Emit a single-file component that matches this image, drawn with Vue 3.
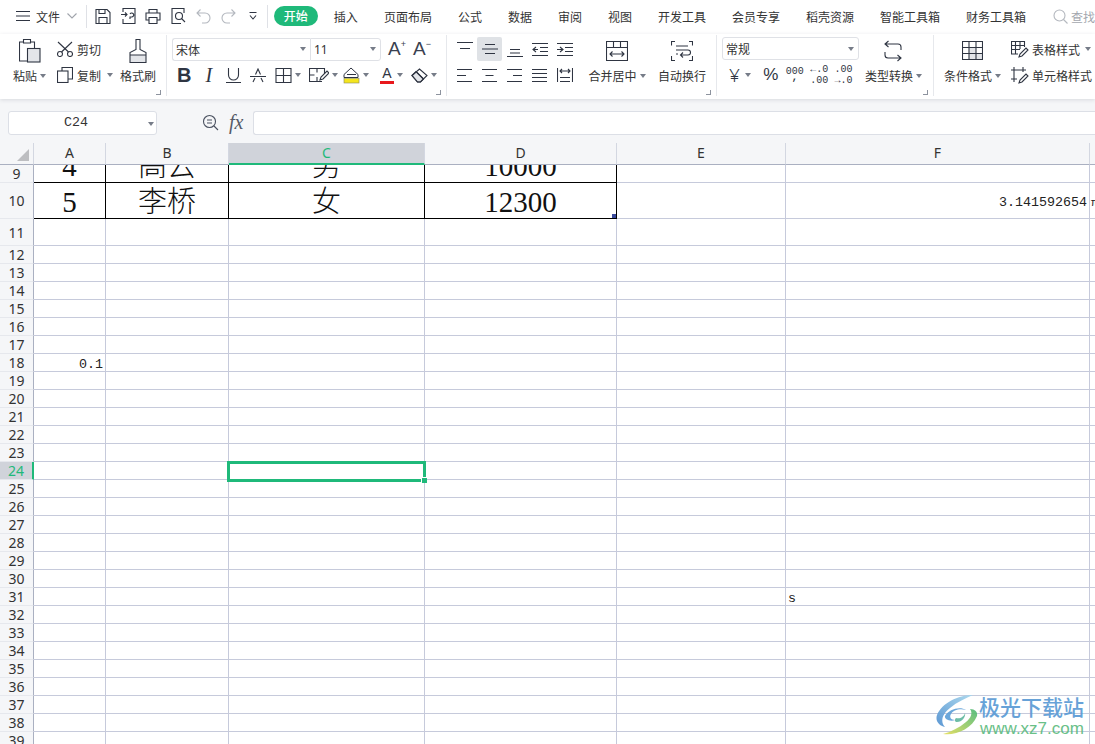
<template>
  <div class="app">
    <!-- top menu bar -->
    <div class="topbar">
      <svg class="ic menu-ic" width="14" height="12" viewBox="0 0 14 12"><path d="M0 1.5h14M0 6h14M0 10.5h14" /></svg>
      <span class="file-label">文件</span>
      <svg class="ic chev" width="10" height="6" viewBox="0 0 10 6"><path d="M.5.5L5 5 9.500.5" /></svg>
      <i class="topsep first"></i>
      <div class="quick">
        <svg class="ic" width="16" height="15" viewBox="0 0 16 15"><path d="M1 .5h11l3 3v11H1zM4 .5v4h6v-4M4 14.500V8.500h8v6" /></svg>
      </div>
      <div class="quick">
        <svg class="ic" width="16" height="16" viewBox="0 0 16 16"><path d="M3 4V.5h12v15H3V11M1 6.500h6M5 4.500l2 2-2 2M10 11V9h2a2 2 0 1 0-2-3" /></svg>
      </div>
      <div class="quick">
        <svg class="ic" width="16" height="15" viewBox="0 0 16 15"><path d="M4 4V.5h8V4M4 11H1V4h14v7h-3M4 8.500h8v6H4z" /></svg>
      </div>
      <div class="quick">
        <svg class="ic" width="15" height="16" viewBox="0 0 15 16"><path d="M13 5V.5H1v15h9" /><circle cx="8" cy="8" r="3.500" /><path d="M10.500 10.500l3.500 3.500" /></svg>
      </div>
      <div class="quick">
        <svg class="ic pale" width="15" height="15" viewBox="0 0 15 15"><path d="M4.500.5L1 4l3.500 3.500M1 4h8a5 5 0 0 1 0 10H6" /></svg>
      </div>
      <div class="quick">
        <svg class="ic pale" width="15" height="15" viewBox="0 0 15 15"><path d="M10.500.5L14 4l-3.500 3.500M14 4H6a5 5 0 0 0 0 10h3" /></svg>
      </div>
      <div class="quick">
        <svg class="ic" width="8" height="8" viewBox="0 0 8 8"><path d="M.5.500h7M1 3.500L4 7l3-3.500" /></svg>
      </div>
      <i class="topsep"></i>
      <span class="pill">开始</span>
      <div class="tabs">
        <span v-for="t in tabs" :key="t">{{ t }}</span>
      </div>
      <div class="search">
        <svg class="ic pale" width="15" height="15" viewBox="0 0 15 15"><circle cx="6.500" cy="6.500" r="5.500" /><path d="M10.500 10.500l4 4" /></svg>
        <span>查找</span>
      </div>
    </div>

    <!-- ribbon -->
    <div class="ribbon">
      <div class="group g1">
        <div class="big paste">
          <svg class="ic" width="22" height="24" viewBox="0 0 22 24"><path d="M4 3H.5v19H8M12 3h3.500v6M4.500.5h7V4h-7z" /><rect class="gray" x="8.500" y="9.500" width="12.500" height="13.500" /></svg>
          <span class="lbl">粘贴<b class="caret"></b></span>
        </div>
        <div class="pair">
          <div class="small">
            <svg class="ic" width="16" height="16" viewBox="0 0 16 16"><circle cx="3" cy="13" r="2.500" /><circle cx="13" cy="13" r="2.500" /><path d="M1 1l10.500 10M15 1L4.500 11" /></svg>
            <span>剪切</span>
          </div>
          <div class="small">
            <svg class="ic" width="16" height="16" viewBox="0 0 16 16"><path d="M5 4V.5h10.500V12H11" /><rect x=".5" y="4" width="10.500" height="11.500" fill="#fff" /></svg>
            <span>复制</span><b class="caret gap"></b>
          </div>
        </div>
        <div class="big painter">
          <svg class="ic" width="18" height="24" viewBox="0 0 18 24"><rect class="gray noline" x="1" y="16" width="16" height="7.500" /><path d="M7 .5h4v10l6 3v10H1v-10l6-3zM1 16h16" /></svg>
          <span class="lbl">格式刷</span>
        </div>
        <i class="corner"></i>
      </div>

      <div class="group g2">
        <div class="line">
          <div class="select font-sel">
            <span class="sel-text">宋体</span><b class="caret"></b>
          </div>
          <div class="select size-sel">
            <span class="sel-text">11</span><b class="caret"></b>
          </div>
          <span class="grow-a first-a">A<sup>+</sup></span>
          <span class="grow-a">A<sup>−</sup></span>
        </div>
        <div class="line">
          <span class="tool bold">B</span>
          <span class="tool ital">I</span>
          <span class="tool">
            <svg class="ic" width="15" height="15" viewBox="0 0 15 15"><path d="M2.500 0v7a5 5 0 0 0 10 0V0M0 14.500h15" /></svg>
          </span>
          <span class="tool">
            <svg class="ic" width="16" height="15" viewBox="0 0 16 15"><path d="M5.500 6.500L8 1l2.500 5.500M0 8.500h16M3 14l2-4M13 14l-2-4" /></svg>
          </span>
          <span class="tool wide">
            <svg class="ic" width="17" height="15" viewBox="0 0 17 15"><path d="M1 .5h15v14H1zM8.500.5v14M1 7.500h15" /></svg>
            <b class="caret"></b>
          </span>
          <span class="tool wide">
            <svg class="ic" width="20" height="17" viewBox="0 0 20 17"><path d="M13 14.500H.5V1.500h15V7M8 1.500v4M8 10v4M.5 8h5" /><path d="M11 13l1-3 6-6 2 2-6 6z" /></svg>
            <b class="caret"></b>
          </span>
          <span class="tool wide">
            <svg width="17" height="17" viewBox="0 0 17 17"><path d="M1 7.500L8 1l7 6.500v3H1z" fill="#fff" stroke="#2f3542" /><path d="M4 7.500h9" stroke="#2f3542" /><rect x="1" y="11.500" width="15" height="4.500" fill="#f4e51e" stroke="#8a8a60" stroke-width=".6" /></svg>
            <b class="caret"></b>
          </span>
          <span class="tool wide">
            <span class="color-a">A</span>
            <b class="caret"></b>
          </span>
          <span class="tool wide">
            <svg class="ic" width="17" height="15" viewBox="0 0 17 15"><path class="gray" d="M1 7.500L5 3.500l7.500 7.500-3 3h-3z" /><path d="M1 7.500L8.500 1 16 7.500 9.500 14h-3zM5 3.500l7.500 7.500" /></svg>
            <b class="caret"></b>
          </span>
        </div>
        <i class="corner"></i>
      </div>

      <div class="group g3">
        <div class="aligns">
          <span class="al"><svg class="ic" width="16" height="16" viewBox="0 0 16 16"><path d="M0 1.500h16M3 7.500h10" /></svg></span>
          <span class="al on"><svg class="ic" width="16" height="16" viewBox="0 0 16 16"><path d="M3 3.500h10M0 8h16M3 12.500h10" /></svg></span>
          <span class="al"><svg class="ic" width="16" height="16" viewBox="0 0 16 16"><path d="M3 8.500h10M3 12h10M0 15.500h16" /></svg></span>
          <span class="al"><svg class="ic" width="16" height="13" viewBox="0 0 16 13"><path d="M0 .5h16M8 4.500h8M8 8.500h8M0 12.500h16M4 4L1 6.500 4 9M1 6.500h5" /></svg></span>
          <span class="al"><svg class="ic" width="16" height="13" viewBox="0 0 16 13"><path d="M0 .5h16M8 4.500h8M8 8.500h8M0 12.500h16M3 4l3 2.500L3 9M6 6.500H0" /></svg></span>
          <span class="al"><svg class="ic" width="15" height="13" viewBox="0 0 15 13"><path d="M0 .5h15M0 6.500h9M0 12.500h15" /></svg></span>
          <span class="al"><svg class="ic" width="15" height="13" viewBox="0 0 15 13"><path d="M0 .5h15M3.500 6.500h8M0 12.500h15" /></svg></span>
          <span class="al"><svg class="ic" width="15" height="13" viewBox="0 0 15 13"><path d="M0 .5h15M6 6.500h9M0 12.500h15" /></svg></span>
          <span class="al"><svg class="ic" width="15" height="13" viewBox="0 0 15 13"><path d="M0 .5h15M0 4.500h15M0 8.500h15M0 12.500h15" /></svg></span>
          <span class="al"><svg class="ic" width="16" height="14" viewBox="0 0 16 14"><path d="M.5 0v14M15.500 0v14M3 9.500h10M3 13.500h10M3 3h10M5 1L3 3l2 2M11 1l2 2-2 2" /></svg></span>
        </div>
        <div class="big merge">
          <svg class="ic" width="22" height="20" viewBox="0 0 22 20"><path d="M.5.5h21v19H.5zM.5 6.500h21M7.500.5v6M14.500.5v6M4 13h14M6.500 10.500L4 13l2.500 2.500M15.500 10.500L18 13l-2.500 2.500" /></svg>
          <span class="lbl">合并居中<b class="caret"></b></span>
        </div>
        <div class="big wrap">
          <svg class="ic" width="22" height="20" viewBox="0 0 22 20"><path d="M4 .5H.5v4M18 .5h3.500v4M.5 15v4.500H4M21.500 15v4.500H18M5 5h12M5 9h12a2 2 0 0 1 0 5h-7M12 11.500L9.500 14l2.500 2.500M5 13h2" /></svg>
          <span class="lbl">自动换行</span>
        </div>
        <i class="corner"></i>
      </div>

      <div class="group g4">
        <div class="numbers">
          <div class="select num-sel">
            <span class="sel-text">常规</span><b class="caret"></b>
          </div>
          <div class="line num-tools">
            <span class="yen">¥<b class="caret"></b></span>
            <span class="pct">%</span>
            <span class="thou">000<em>,</em></span>
            <span class="dec"><span>←.0</span><span>.00</span></span>
            <span class="dec"><span>.00</span><span>→.0</span></span>
          </div>
        </div>
        <div class="big convert">
          <svg class="ic" width="18" height="22" viewBox="0 0 18 22"><path d="M4.500 1L1 4l3.500 3M1 4h13a3 3 0 0 1 3 3v3M13.500 21L17 18l-3.500-3M17 18H4a3 3 0 0 1-3-3v-3" /></svg>
          <span class="lbl">类型转换<b class="caret"></b></span>
        </div>
        <i class="corner"></i>
      </div>

      <div class="group g5">
        <div class="big cond">
          <svg class="ic" width="21" height="19" viewBox="0 0 21 19"><rect class="gray noline" x="7" y="6" width="7" height="6" /><rect class="gray noline" x="7" y="12" width="14" height="6" /><path d="M.5.5h20v18H.5zM.5 6.500h20M.5 12.500h20M7 .5v18M14 .5v18" /></svg>
          <span class="lbl">条件格式<b class="caret"></b></span>
        </div>
        <div class="pair styles">
          <div class="small">
            <svg class="ic" width="18" height="17" viewBox="0 0 18 17"><path d="M7 13H.5V.5h13V6M.5 4.500h13M.5 8.500H9M4.500.5V13M9 .5V8" /><path d="M8 16l1-3 6-6 2 2-6 6z" /></svg>
            <span>表格样式</span><b class="caret gap"></b>
          </div>
          <div class="small">
            <svg class="ic" width="18" height="17" viewBox="0 0 18 17"><path d="M3 0v15M0 3h15M12 0v5M0 12h6" /><path d="M8 16l1-3 6-6 2 2-6 6z" /></svg>
            <span>单元格样式</span>
          </div>
        </div>
      </div>
    </div>

    <!-- name box + formula input -->
    <div class="formula">
      <div class="namebox">
        <span>C24</span><b class="caret"></b>
      </div>
      <svg class="ic zoom-ic" width="17" height="17" viewBox="0 0 17 17"><circle cx="7.500" cy="7.500" r="6" /><path d="M5 6h5M5 9h5M12 12l4 4" /></svg>
      <span class="fx">fx</span>
      <div class="fx-input"></div>
    </div>

    <!-- sheet -->
    <div class="sheet">
      <div class="row head">
        <div class="corner-cell"><i></i></div>
        <div
          v-for="c in cols"
          :key="c.id"
          class="hcell"
          :class="{ active: c.id === activeCol }"
          :style="{ width: c.w + 'px' }"
        >{{ c.id === 'G' ? '' : c.id }}</div>
      </div>
      <div v-for="r in rows" :key="r.n" class="row" :style="{ height: r.h + 'px' }">
        <div class="rowhead" :class="{ active: r.n === activeRow }">{{ r.n }}</div>
        <div
          v-for="c in cols"
          :key="c.id"
          class="cell"
          :class="{ boxed: r.n < 11 && 'ABCD'.includes(c.id), current: c.id === activeCol && r.n === activeRow }"
          :style="{ width: c.w + 'px' }"
        >
          <span v-if="cells[c.id + r.n]" :class="cells[c.id + r.n].cls">{{ cells[c.id + r.n].v }}</span>
          <i v-if="c.id === 'D' && r.n === 10" class="mark"></i>
          <div v-if="c.id === activeCol && r.n === activeRow" class="selection"><i></i></div>
        </div>
      </div>
    </div>

    <!-- site watermark -->
    <div class="watermark">
      <svg width="43" height="42" viewBox="0 0 43 42">
        <defs>
          <linearGradient id="wmBlue" x1="0" y1="1" x2="1" y2="0">
            <stop offset="0" stop-color="#4f8fd0" />
            <stop offset="1" stop-color="#a8d8ee" />
          </linearGradient>
          <linearGradient id="wmGreen" x1="0" y1="1" x2="1" y2="0">
            <stop offset="0" stop-color="#e6df5a" />
            <stop offset="1" stop-color="#4bb878" />
          </linearGradient>
        </defs>
        <path d="M37 1C22 1 6 9 1 21c-2 6 2 11 8 12C4 28 6 20 14 14 21 8 30 4 37 1z" fill="url(#wmBlue)" />
        <path d="M9 22c4-7 15-10 21-6-6-2-13 0-15 4-2 3 0 6 4 6-5 2-11-1-10-4z" fill="#5fa0d8" />
        <path d="M7 40c12 2 29-5 34-18 1-4-2-7-7-7 3 4 1 9-4 13-7 6-16 10-23 12z" fill="url(#wmGreen)" />
        <path d="M20 24c4 1 8-1 9-5 1 4-3 9-8 9-2 0-3-2-1-4z" fill="#62b8a0" />
      </svg>
      <div class="wm-text">
        <span class="wm-title">极光下载站</span>
        <span class="wm-url">www.xz7.com</span>
      </div>
    </div>
  </div>
</template>

<script setup>
const tabs = ['插入', '页面布局', '公式', '数据', '审阅', '视图', '开发工具', '会员专享', '稻壳资源', '智能工具箱', '财务工具箱']

const cols = [
  { id: 'A', w: 72 },
  { id: 'B', w: 123 },
  { id: 'C', w: 196 },
  { id: 'D', w: 192 },
  { id: 'E', w: 169 },
  { id: 'F', w: 304 },
  { id: 'G', w: 40 },
]

const activeCol = 'C'
const activeRow = 24

// row 9 is scrolled, only its lower part shows
const rows = []
for (let n = 9; n <= 39; n++) {
  let h = 18
  if (n === 10) h = 36
  if (n === 11) h = 27
  rows.push({ n, h })
}

const cells = {
  A9: { v: '4', cls: 'big-text' },
  B9: { v: '高云', cls: 'big-text' },
  C9: { v: '男', cls: 'big-text' },
  D9: { v: '10000', cls: 'big-text' },
  A10: { v: '5', cls: 'big-text' },
  B10: { v: '李桥', cls: 'big-text' },
  C10: { v: '女', cls: 'big-text' },
  D10: { v: '12300', cls: 'big-text' },
  F10: { v: '3.141592654', cls: 'mono right mid' },
  G10: { v: 'π', cls: 'mono mid tiny' },
  A18: { v: '0.1', cls: 'mono right' },
  F31: { v: 's', cls: 'mono left' },
}
</script>

<style>
html, body {
  margin: 0;
  background: #fff;
}
</style>

<style scoped>
.app {
  position: relative;
  width: 1095px;
  height: 744px;
  overflow: hidden;
  background: #f5f6f8;
  font-family: "Noto Sans CJK SC", "Liberation Sans", sans-serif;
  font-size: 12px;
  color: #333;
}

.ic {
  display: block;
  flex: none;
  fill: none;
  stroke: #2f3542;
  stroke-width: 1.1;
}
.ic.pale {
  stroke: #b4b8bf;
}
.ic .gray {
  fill: #e3e5e9;
}
.ic .noline {
  stroke: none;
}

.caret {
  display: inline-block;
  width: 0;
  height: 0;
  border-left: 3px solid transparent;
  border-right: 3px solid transparent;
  border-top: 4px solid #767c88;
  flex: none;
}

/* top bar */
.topbar {
  display: flex;
  align-items: center;
  box-sizing: border-box;
  height: 34px;
  padding: 0 0 2px 16px;
  background: #fff;
}
.file-label {
  margin-left: 6px;
}
.chev {
  margin-left: 7px;
  stroke: #a0a4ab;
}
.topsep {
  width: 1px;
  height: 23px;
  margin: 0 0 0 1px;
  background: #dfe1e6;
}
.topsep.first {
  margin: 0 4px 0 9px;
}
.quick {
  display: flex;
  align-items: center;
  justify-content: center;
  width: 25px;
  height: 24px;
}
.pill {
  width: 44px;
  height: 20px;
  margin-left: 6px;
  border-radius: 10px;
  background: #1fb97a;
  color: #fff;
  font-weight: 500;
  line-height: 20px;
  text-align: center;
}
.tabs {
  display: flex;
  gap: 26px;
  margin-left: 16px;
  white-space: nowrap;
}
.search {
  display: flex;
  align-items: center;
  gap: 3px;
  margin-left: 27px;
  color: #a3a7ae;
  white-space: nowrap;
}

/* ribbon */
.ribbon {
  position: relative;
  display: flex;
  box-sizing: border-box;
  height: 65px;
  padding-top: 1px;
  background: #fff;
  box-shadow: 0 1px 4px rgba(40, 50, 70, 0.14);
}
.group {
  position: relative;
  display: flex;
  box-sizing: border-box;
  height: 61px;
  padding-top: 2px;
  border-right: 1px solid #e6e8ec;
}
.corner {
  position: absolute;
  right: 5px;
  bottom: 1px;
  width: 4px;
  height: 4px;
  border-right: 1px solid #8d939e;
  border-bottom: 1px solid #8d939e;
}
.big {
  display: flex;
  flex-direction: column;
  align-items: center;
  justify-content: space-between;
  height: 48px;
  flex: none;
}
.big > svg {
  margin-top: 2px;
}
.lbl {
  height: 18px;
  line-height: 18px;
  display: flex;
  align-items: center;
  gap: 3px;
  white-space: nowrap;
}
.pair {
  display: flex;
  flex-direction: column;
  gap: 2px;
}
.small {
  display: flex;
  align-items: center;
  gap: 4px;
  height: 24px;
  white-space: nowrap;
}
.caret.gap {
  margin-left: 2px;
}

.g1 {
  width: 167px;
  padding-left: 13px;
}
.paste {
  width: 33px;
}
.g1 .pair {
  width: 54px;
  margin-left: 11px;
}
.painter {
  width: 36px;
  margin-left: 9px;
}

.g2 {
  width: 280px;
  flex-direction: column;
  gap: 2px;
  padding-left: 5px;
}
.line {
  display: flex;
  align-items: center;
  height: 24px;
}
.select {
  display: flex;
  align-items: center;
  justify-content: space-between;
  box-sizing: border-box;
  height: 23px;
  padding: 0 4px 0 3px;
  background: #fff;
  border: 1px solid #dfe1e6;
}
.font-sel {
  width: 138px;
  border-radius: 3px 0 0 3px;
  border-right: 0;
}
.size-sel {
  width: 71px;
  border-radius: 0 3px 3px 0;
  font-family: "Noto Sans", sans-serif;
}
.grow-a {
  width: 25px;
  font-family: "Liberation Sans", sans-serif;
  font-size: 19px;
  line-height: 20px;
  color: #3a4150;
  white-space: nowrap;
}
.first-a {
  margin-left: 7px;
}
.grow-a sup {
  font-size: 9px;
  line-height: 0;
  vertical-align: 8px;
}
.tool {
  display: flex;
  align-items: center;
  justify-content: center;
  width: 24.500px;
  height: 24px;
  color: #2f3542;
}
.tool.wide {
  justify-content: flex-start;
  gap: 3px;
  width: 34px;
  padding-left: 5px;
  box-sizing: border-box;
}
.bold {
  font: 700 20px "Liberation Sans", sans-serif;
}
.ital {
  font: italic 400 20px "Liberation Serif", serif;
}
.color-a {
  display: block;
  width: 14px;
  height: 15px;
  margin-left: 3px;
  border-bottom: 3px solid #e8181c;
  font: 400 14px/15px "Liberation Sans", sans-serif;
  text-align: center;
}

.g3 {
  width: 270px;
  padding-left: 5px;
}
.aligns {
  display: grid;
  grid-template-columns: repeat(5, 25px);
  grid-auto-rows: 24px;
  row-gap: 2px;
  width: 125px;
}
.al {
  display: flex;
  align-items: center;
  justify-content: center;
  border-radius: 2px;
}
.al.on {
  background: #dfe2e6;
}
.merge {
  width: 80px;
}
.wrap {
  width: 50px;
}
.merge > svg,
.wrap > svg {
  margin-top: 4px;
}

.g4 {
  width: 217px;
  padding-left: 5px;
}
.numbers {
  width: 137px;
}
.num-sel {
  width: 137px;
  border-radius: 3px;
}
.num-tools {
  margin-top: 3px;
  color: #2f3542;
  font-family: "Liberation Sans", sans-serif;
}
.yen {
  display: flex;
  align-items: center;
  gap: 5px;
  width: 42px;
  padding-left: 7px;
  box-sizing: border-box;
  font-family: "Noto Sans", sans-serif;
  font-size: 19px;
  font-weight: 300;
}
.pct {
  width: 23px;
  font-size: 17px;
}
.thou {
  position: relative;
  width: 25px;
  margin-top: -8px;
  font-family: "Liberation Mono", monospace;
  font-size: 10px;
}
.thou em {
  position: absolute;
  left: 6px;
  top: 6px;
  font-style: normal;
  font-weight: 700;
}
.dec {
  display: flex;
  flex-direction: column;
  width: 25px;
  font-family: "Liberation Mono", monospace;
  font-size: 10px;
  line-height: 11px;
}
.convert {
  width: 56px;
  margin-left: 6px;
  align-items: flex-start;
}
.convert > svg {
  margin: 3px 0 0 19px;
}

.g5 {
  flex: 1;
  border-right: 0;
  padding-left: 10px;
}
.cond {
  width: 58px;
  align-items: flex-start;
}
.cond > svg {
  margin: 4px 0 0 18px;
}
.styles {
  margin-left: 9px;
}
.styles .small {
  gap: 3px;
}

/* formula row */
.formula {
  display: flex;
  align-items: center;
  box-sizing: border-box;
  height: 44px;
  padding: 3px 0 0 8px;
}
.namebox {
  position: relative;
  display: flex;
  align-items: center;
  justify-content: center;
  box-sizing: border-box;
  width: 149px;
  height: 24px;
  padding-right: 13px;
  background: #fff;
  border: 1px solid #dcdfe6;
  border-radius: 3px;
  font-family: "Liberation Mono", monospace;
  font-size: 13.330px;
}
.namebox .caret {
  position: absolute;
  right: 2px;
  top: 10px;
}
.zoom-ic {
  margin-left: 45px;
  stroke: #4a5160;
}
.fx {
  width: 24px;
  margin-left: 10px;
  font: italic 400 20px "Liberation Serif", serif;
  color: #555b68;
}
.fx-input {
  flex: 1;
  height: 24px;
  box-sizing: border-box;
  background: #fff;
  border: 1px solid #dcdfe6;
  border-right: 0;
  border-radius: 3px 0 0 3px;
}

/* sheet */
.sheet {
  height: 601px;
  overflow: hidden;
  background: #fff;
}
.row {
  display: flex;
}
.head {
  height: 22px;
  background: #f5f6f8;
  font-family: "Noto Sans", sans-serif;
  font-size: 14px;
}
.corner-cell {
  flex: none;
  box-sizing: border-box;
  width: 34px;
  padding: 6px 0 0 17px;
  border-bottom: 1px solid #aab0c1;
  border-right: 1px solid #d3d7e1;
}
.corner-cell i {
  display: block;
  width: 12px;
  height: 12px;
  background: #bdbec1;
  clip-path: polygon(100% 0, 100% 100%, 0 100%);
}
.hcell {
  flex: none;
  box-sizing: border-box;
  line-height: 20px;
  text-align: center;
  color: #333;
  border-bottom: 1px solid #aab0c1;
  border-right: 1px solid #d3d7e1;
}
.hcell.active {
  background: #d0d3da;
  color: #1fb97a;
  border-bottom: 2px solid #1fb97a;
}
.rowhead {
  flex: none;
  display: flex;
  align-items: center;
  justify-content: center;
  box-sizing: border-box;
  width: 34px;
  background: #f5f6f8;
  border-right: 1px solid #aab0c1;
  border-bottom: 1px solid #e6e8ed;
  font-family: "Noto Sans", sans-serif;
  font-size: 14px;
}
.rowhead.active {
  background: #d0d3da;
  color: #1fb97a;
  border-right: 2px solid #1fb97a;
}
.cell {
  position: relative;
  flex: none;
  display: flex;
  align-items: flex-end;
  justify-content: center;
  box-sizing: border-box;
  overflow: hidden;
  border-right: 1px solid #c6cadb;
  border-bottom: 1px solid #c6cadb;
}
.cell.boxed {
  border-right-color: #000;
  border-bottom-color: #000;
}
.cell.current {
  overflow: visible;
}
.big-text {
  display: block;
  font-family: "Liberation Serif", "Noto Sans CJK SC", serif;
  font-size: 29px;
  font-weight: 300;
  line-height: 31px;
  color: #111;
  white-space: nowrap;
}
.mono {
  position: absolute;
  bottom: -1px;
  font-family: "Liberation Mono", monospace;
  font-size: 13.330px;
  line-height: 14px;
  color: #222;
  white-space: nowrap;
}
.mono.right {
  right: 2px;
}
.mono.left {
  left: 2px;
}
.mono.mid {
  bottom: 8px;
}
.mono.tiny {
  left: 1px;
  font-size: 11px;
}
.mark {
  position: absolute;
  right: 0;
  bottom: 0;
  width: 4px;
  height: 4px;
  background: #3a4a9c;
}
.selection {
  position: absolute;
  left: -2px;
  top: -1px;
  z-index: 2;
  box-sizing: border-box;
  width: 199px;
  height: 21px;
  border: 3px solid #1fb97a;
}
.selection i {
  position: absolute;
  right: -4px;
  bottom: -4px;
  width: 5px;
  height: 5px;
  background: #1fb97a;
  border-left: 1px solid #fff;
  border-top: 1px solid #fff;
}

/* watermark */
.watermark {
  position: absolute;
  left: 936px;
  top: 694px;
  z-index: 3;
  display: flex;
  opacity: 0.92;
}
.wm-text {
  display: flex;
  flex-direction: column;
}
.wm-title {
  font-size: 21px;
  font-weight: 500;
  line-height: 24px;
  color: #5b9bd5;
  white-space: nowrap;
}
.wm-url {
  margin-top: 1px;
  margin-left: 1px;
  font-family: "Liberation Sans", sans-serif;
  font-size: 17px;
  line-height: 20px;
  color: #5dbb7e;
  white-space: nowrap;
}
</style>
